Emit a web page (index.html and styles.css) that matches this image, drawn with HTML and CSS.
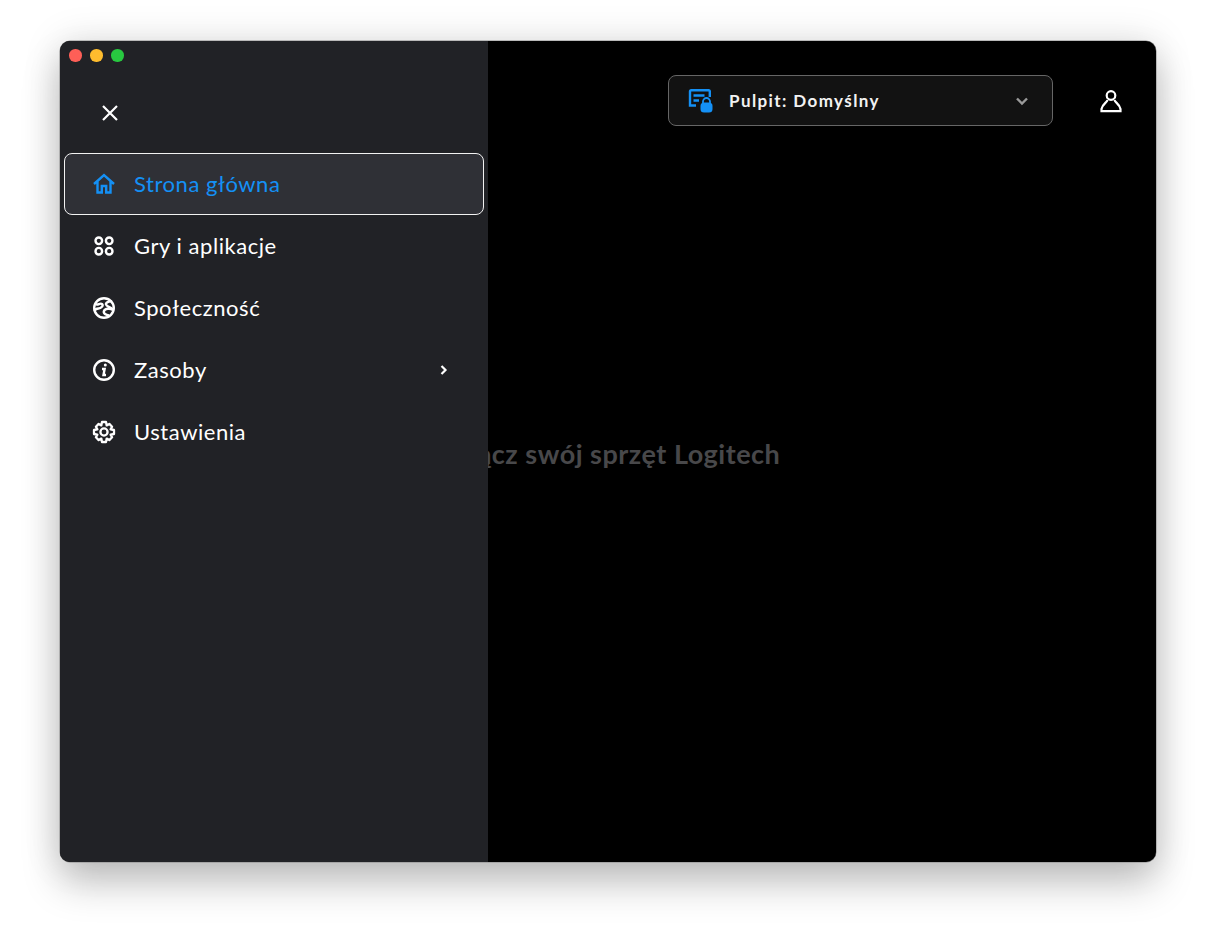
FILE: index.html
```html
<!DOCTYPE html>
<html lang="pl">
<head>
<meta charset="utf-8">
<title>Logitech</title>
<link rel="stylesheet" href="styles.css">
</head>
<body>
<div class="window">
  <main class="main">
    <header class="topbar">
      <button class="profile">
        <svg class="profile-icon" width="25" height="25" viewBox="0 0 25 25" fill="none" stroke="#1490f5" stroke-width="2.400">
          <path d="M8 17.500H2V3.500Q2 2.200 3.300 2.200H20.500Q21.800 2.200 21.800 3.500V9"/>
          <path d="M5.500 7.500H16.500M5.500 12.500H11"/>
          <path d="M15 15.500V13.500a3.500 3.500 0 0 1 7 0V15.500" stroke-width="1.800"/>
          <rect x="12.500" y="14.500" width="12" height="10" rx="3.500" fill="#1490f5" stroke="none"/>
        </svg>
        <span class="profile-name">Pulpit: Domyślny</span>
        <svg class="chevron" width="14" height="14" viewBox="0 0 14 14" fill="none" stroke="#9a9a9a" stroke-width="2.400"><path d="M2 4.500L7 9.500L12 4.500"/></svg>
      </button>
      <svg class="user" width="24" height="24" viewBox="0 0 24 24" fill="none" stroke="#fff" stroke-width="2.200">
        <circle cx="12" cy="6.500" r="4.300"/>
        <path d="M8.500 11C8 13.500 3.500 15 2.500 20V22.200H21.500V20C20.500 15 16 13.500 15.500 11"/>
      </svg>
    </header>
    <div class="empty"><span>Połącz swój sprzęt Logitech</span></div>
  </main>
  <aside class="sidebar">
    <div class="lights"><i class="light red"></i><i class="light yellow"></i><i class="light green"></i></div>
    <svg class="close" width="18" height="18" viewBox="0 0 18 18" stroke="#fff" stroke-width="2.200" fill="none"><path d="M2 2L16 16M16 2L2 16"/></svg>
    <nav class="nav">
      <a class="item active">
        <svg width="24" height="24" viewBox="0 0 24 24" fill="none" stroke="#1490f5" stroke-width="2.400"><path d="M2 12L12 3L22 12M5.500 9.500V20.500H9.800V14H14.200V20.500H18.500V9.500"/></svg>
        <span>Strona główna</span>
      </a>
      <a class="item">
        <svg width="24" height="24" viewBox="0 0 24 24" fill="none" stroke="#fff" stroke-width="2.400"><circle cx="6.800" cy="6.800" r="3.300"/><circle cx="17.200" cy="6.800" r="3.300"/><circle cx="6.800" cy="17.200" r="3.300"/><circle cx="17.200" cy="17.200" r="3.300"/></svg>
        <span>Gry i aplikacje</span>
      </a>
      <a class="item">
        <svg width="24" height="24" viewBox="0 0 24 24" fill="none" stroke="#fff" stroke-width="2.400"><circle cx="12" cy="12" r="9.800"/><path d="M3.500 8C5.500 10 8 6.500 10 8S9 12.500 6.500 12.500 3 13.500 2.500 15M20 5.500C17 5 13.500 6.500 14 8.500S18.500 11 20 12.500 21 13.500 21.500 13.500M21 14C18 12 13 12.500 12 15S14 19 17 19.500"/></svg>
        <span>Społeczność</span>
      </a>
      <a class="item">
        <svg width="24" height="24" viewBox="0 0 24 24" fill="none" stroke="#fff" stroke-width="2.400"><circle cx="12" cy="12" r="9.800"/><path d="M10 11H12.600L11.500 17H14"/><circle cx="13.300" cy="7" r="1.500" fill="#fff" stroke="none"/></svg>
        <span>Zasoby</span>
        <svg class="more" width="10" height="12" viewBox="0 0 10 12" fill="none" stroke="#fff" stroke-width="2.200"><path d="M2.500 2L6.500 6L2.500 10"/></svg>
      </a>
      <a class="item">
        <svg width="24" height="24" viewBox="0 0 24 24" fill="none" stroke="#fff" stroke-width="2.300" stroke-linejoin="round"><circle cx="12" cy="12" r="3.600"/><path d="M10 2H14L14.700 5.400L17.300 3.900L20.100 6.700L18.600 9.300L22 10V14L18.600 14.700L20.100 17.300L17.300 20.100L14.700 18.600L14 22H10L9.300 18.600L6.700 20.100L3.900 17.300L5.400 14.700L2 14V10L5.400 9.300L3.900 6.700L6.700 3.900L9.300 5.400Z"/></svg>
        <span>Ustawienia</span>
      </a>
    </nav>
  </aside>
</div>
</body>
</html>
```
FILE: styles.css
```css
* { box-sizing: border-box; }
html, body { margin: 0; height: 100%; }
body {
  background: #fff;
  padding: 41px 60px 80px;
  font-family: Lato, "Liberation Sans", sans-serif;
  overflow: hidden;
}
.window {
  position: relative;
  height: 821px;
  background: #000;
  border-radius: 10px;
  box-shadow: 0 0 0 0.5px #8a8a8a, 0 22px 38px rgba(0,0,0,.22), 0 0 38px rgba(0,0,0,.13);
}
.main {
  height: 100%;
  display: flex;
  flex-direction: column;
  border-radius: 10px;
  overflow: hidden;
}
.topbar {
  display: flex;
  align-items: center;
  justify-content: flex-end;
  padding: 34px 33px 0 0;
  gap: 46px;
}
.profile {
  width: 385px;
  height: 51px;
  display: flex;
  align-items: center;
  padding: 0 23px 0 19px;
  background: #121212;
  border: 1px solid #666;
  border-radius: 8px;
  color: #fff;
  font: inherit;
}
.profile-name {
  margin-left: 16px;
  font-size: 17px;
  font-weight: 700;
  letter-spacing: 1.400px;
  color: #f2f2f2;
}
.chevron { margin-left: auto; }
.user { flex: none; }
.empty {
  flex: 1;
  display: flex;
  justify-content: center;
  padding-top: 311px;
  font-size: 27px;
  font-weight: 700;
  letter-spacing: .5px;
  color: #48484a;
}
.sidebar {
  position: absolute;
  left: 0;
  top: 0;
  bottom: 0;
  width: 428px;
  background: #212226;
  border-radius: 10px 0 0 10px;
}
.lights {
  display: flex;
  gap: 8.500px;
  padding: 8px 0 0 9px;
}
.light {
  width: 12.500px;
  height: 12.500px;
  border-radius: 50%;
}
.red { background: #fe5f57; }
.yellow { background: #febc2e; }
.green { background: #28c840; }
.close {
  display: block;
  margin: 42px 0 0 41px;
}
.nav {
  display: flex;
  flex-direction: column;
  margin-top: 31px;
  padding: 0 4px;
}
.item {
  height: 62px;
  display: flex;
  align-items: center;
  gap: 18px;
  padding: 0 34px 0 27px;
  border: 1px solid transparent;
  border-radius: 8px;
  font-size: 22px;
  letter-spacing: .55px;
  font-weight: 400;
  color: #fff;
}
.item svg { flex: none; }
.active {
  background: #2f3036;
  border-color: #f2f2f2;
  color: #1490f5;
}
.more { margin-left: auto; }
```
